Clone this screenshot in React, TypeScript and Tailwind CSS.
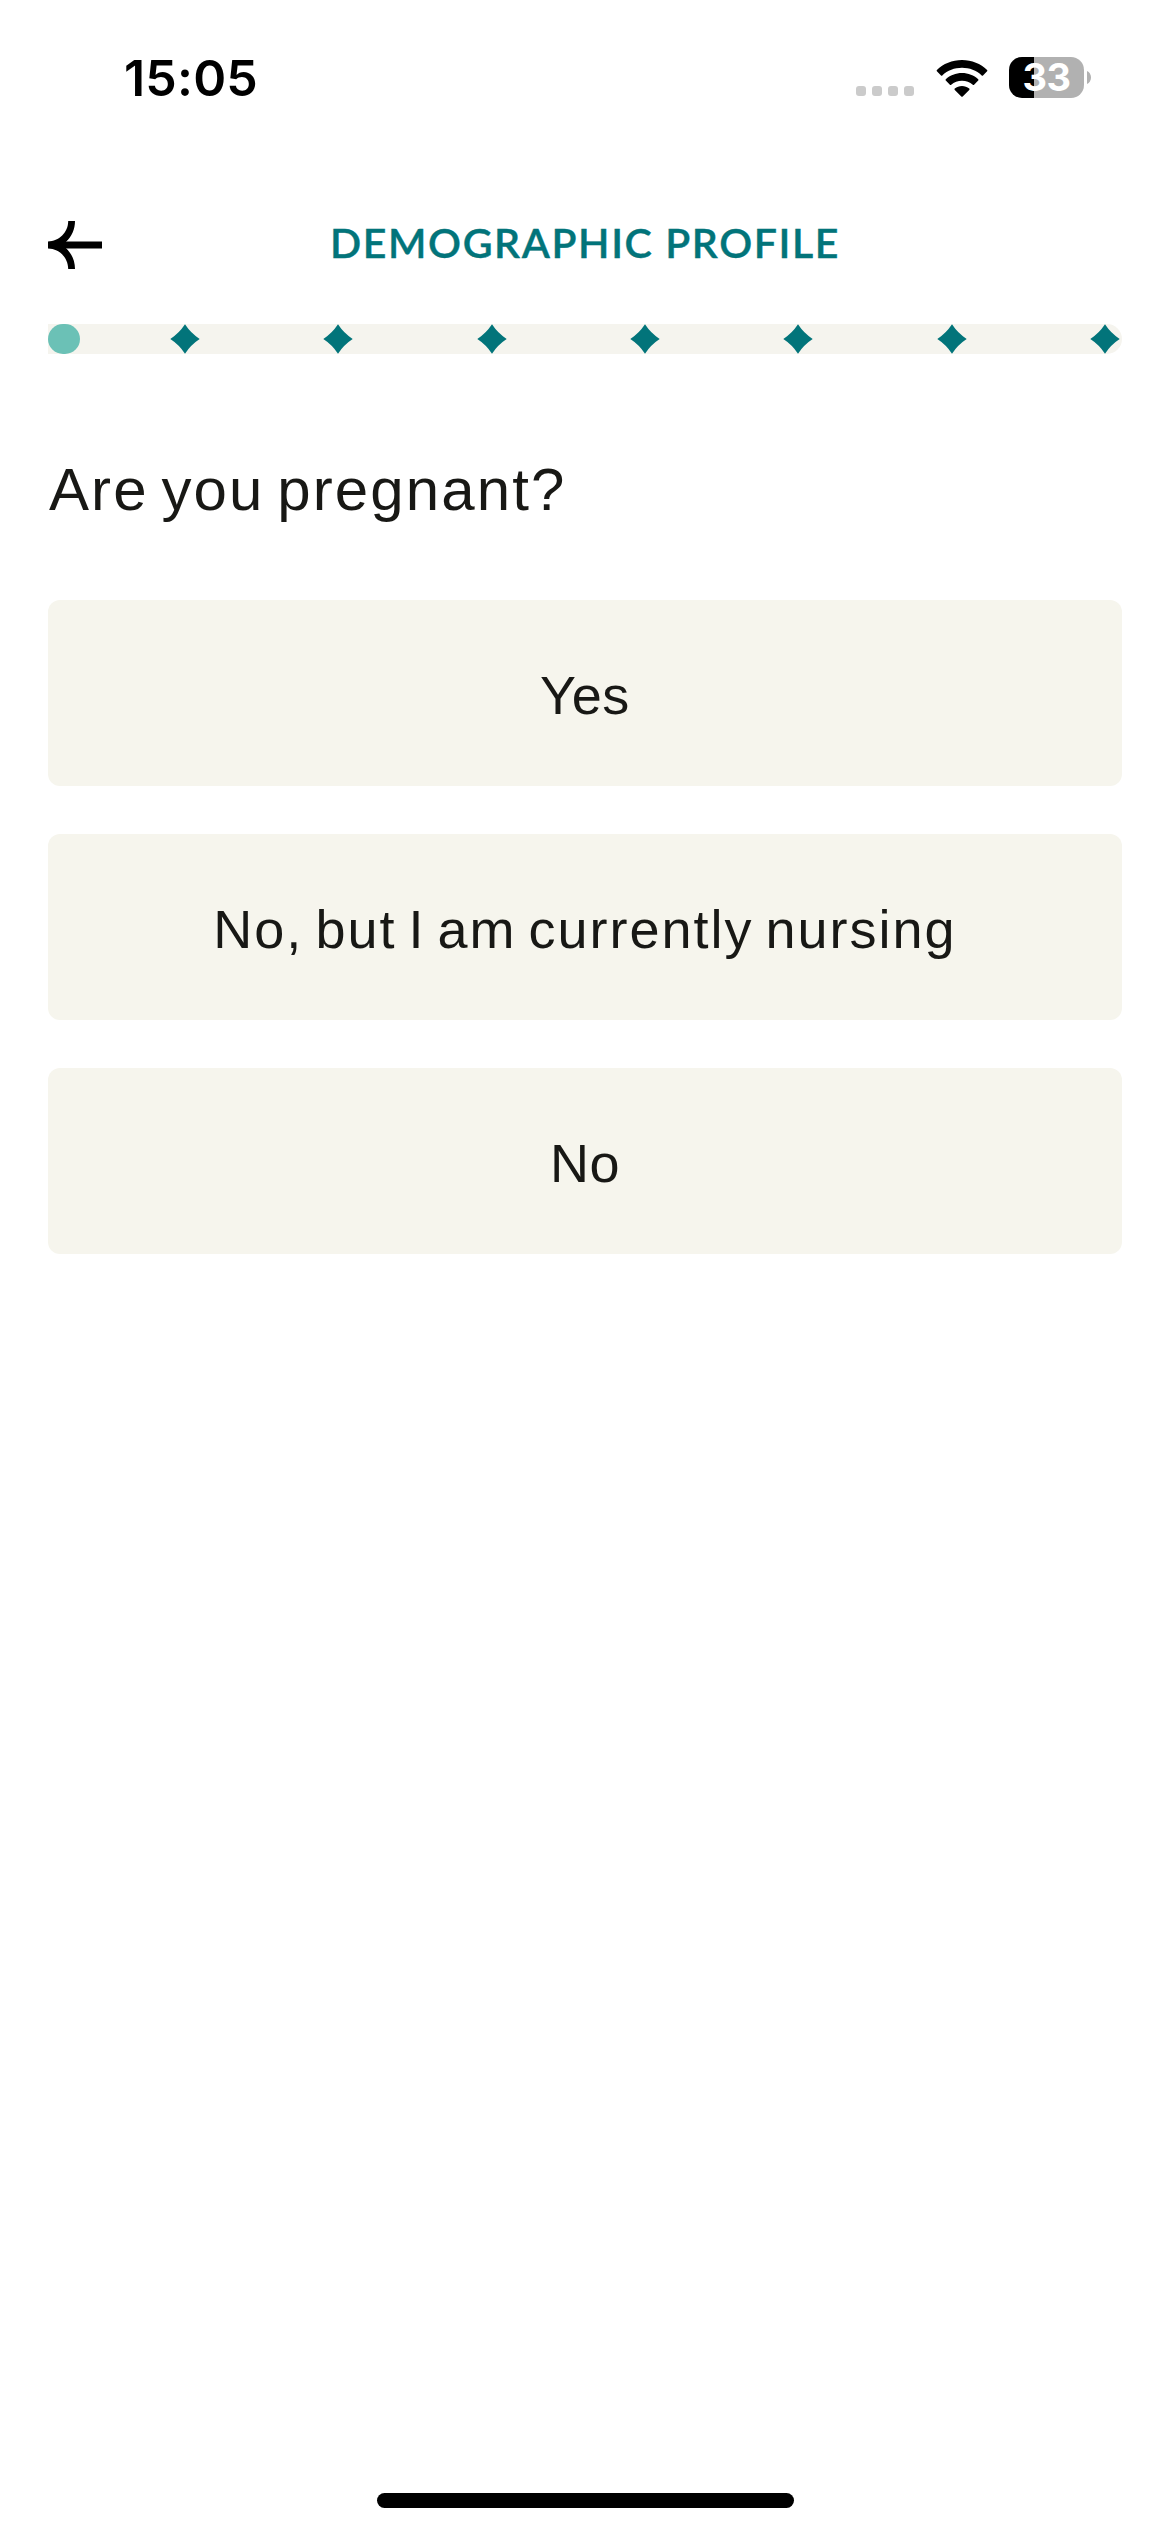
import React from 'react';

const OPTIONS = [
  { id: 'yes', label: 'Yes', className: 'tracking-[0.6px]' },
  { id: 'nursing', label: 'No, but I am currently nursing', className: 'tracking-[2px] [word-spacing:-5px]' },
  { id: 'no', label: 'No', className: 'tracking-[0.6px]' },
];

const STEPS = [1, 2, 3, 4, 5, 6, 7];

const StatusBar: React.FC = () => (
  <div className="flex h-[156px] items-start justify-between pl-[124px] pr-[79px] pt-[57px]">
    <span className="font-[Inter,sans-serif] text-[50px] font-semibold leading-[42px] tracking-[0.2px] text-black">
      15:05
    </span>
    <div className="flex h-[41px] items-center">
      <div className="mt-[27px] flex gap-[6px]">
        {[0, 1, 2, 3].map((dot) => (
          <span key={dot} className="size-[10px] rounded-[3px] bg-[#cbcbcb]" />
        ))}
      </div>
      <svg className="ml-[22px] h-[38px] w-[52px]" viewBox="0 0 52 38" fill="#000">
        <path d="M26 1C35.800 1 44.800 4.800 51.100 10.900Q51.700 11.600 51.100 12.200L47 16.400Q46.400 17 45.700 16.400C40.400 11.500 33.500 8.800 26 8.800S11.600 11.500 6.300 16.400Q5.600 17 5 16.400L.9 12.200Q.3 11.600.9 10.900C7.200 4.800 16.200 1 26 1Z" />
        <path d="M26 14C32.200 14 38 16.300 42.200 20.200Q42.900 20.900 42.200 21.500L38.100 25.700Q37.500 26.300 36.800 25.700C33.900 23.200 30.100 21.700 26 21.700S18.100 23.200 15.200 25.700Q14.500 26.300 13.900 25.700L9.800 21.500Q9.100 20.900 9.800 20.200C14 16.300 19.800 14 26 14Z" />
        <path d="M26 27C28.700 27 31.200 27.900 33.200 29.500Q33.900 30.200 33.200 30.900L26.700 37.500Q26 38.200 25.300 37.500L18.800 30.900Q18.100 30.200 18.800 29.500C20.800 27.900 23.300 27 26 27Z" />
      </svg>
      <div className="ml-[21px] flex h-[41px] w-[75px] items-center justify-center rounded-[13px] bg-[linear-gradient(to_right,#000_25px,#b1b1b1_25px)]">
        <span className="font-[Inter,sans-serif] text-[38px] font-bold leading-[41px] tracking-[-0.5px] text-white">
          33
        </span>
      </div>
      <svg className="ml-[3px] h-[13px] w-[4px]" viewBox="0 0 4 13" fill="#b1b1b1">
        <path d="M0 0C2.500 1.200 4 3.600 4 6.500S2.500 11.800 0 13Z" />
      </svg>
    </div>
  </div>
);

const Header: React.FC = () => (
  <header className="grid h-[168px] grid-cols-[54px_1fr_54px] items-start px-12 pt-[64px]">
    <button type="button" aria-label="Back" className="mt-px cursor-pointer">
      <svg className="h-[48px] w-[54px]" viewBox="0 0 54 48" fill="#000">
        <path d="M10 20.500H54V27.500H10Z" />
        <path d="M0 20.400C11 20.400 20.200 11.500 20.200 0H27C27 8.200 23.800 15.600 18 20.800V27.200C23.800 32.400 27 39.800 27 48H20.200C20.200 36.500 11 27.600 0 27.600Z" />
      </svg>
    </button>
    <h1 className="text-center font-[Lato,sans-serif] text-[41px] font-semibold leading-[46px] tracking-[1.6px] text-[#02747a] [-webkit-text-stroke:0.4px_#02747a]">
      DEMOGRAPHIC PROFILE
    </h1>
  </header>
);

const StepProgress: React.FC = () => (
  <div className="mx-12 flex h-[30px] items-center justify-between rounded-r-full bg-[#f5f4ee] pr-[2px]">
    <span className="mr-[90px] h-[30px] w-[32px] rounded-full bg-[#6bc1b6]" />
    <div className="flex flex-1 items-center justify-between">
      {STEPS.map((step) => (
        <svg key={step} className="size-[30px]" viewBox="0 0 30 30" fill="#02747a">
          <path d="M15 .3Q20.800 9.200 29.700 15Q20.800 20.800 15 29.700Q9.200 20.800 .3 15Q9.200 9.200 15 .3Z" />
        </svg>
      ))}
    </div>
  </div>
);

export default function App() {
  return (
    <div className="flex h-[2532px] w-[1170px] flex-col bg-white text-[#181815]">
      <StatusBar />
      <Header />
      <StepProgress />

      <main className="flex-1 px-12 pt-[102px] font-['Liberation_Sans',Arial,sans-serif]">
        <h2 className="pl-px text-[60px] leading-[68px] tracking-[2.1px] [word-spacing:-6px]">
          Are you pregnant?
        </h2>
        <div className="mt-[76px] flex flex-col gap-12">
          {OPTIONS.map((option) => (
            <button
              key={option.id}
              type="button"
              className="flex h-[186px] w-full cursor-pointer items-center justify-center rounded-[12px] bg-[#f6f5ed] pt-[4px]"
            >
              <span className={`text-[54px] leading-[62px] ${option.className}`}>{option.label}</span>
            </button>
          ))}
        </div>
      </main>

      <div className="mx-auto mb-[24px] h-[15px] w-[417px] rounded-full bg-black" />
    </div>
  );
}
